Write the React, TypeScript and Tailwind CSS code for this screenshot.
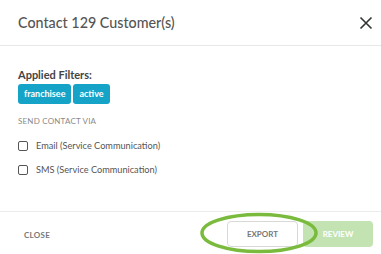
import React from "react";

export default function App() {
  const font = { fontFamily: "Lato, 'Open Sans', sans-serif" };
  return (
    <div className="relative w-[381px] h-[254px] bg-white overflow-hidden" style={font}>
      <div className="flex items-center justify-between h-[46px] pl-[18px] pr-[8px] border-b border-[#e8e8e8]">
        <div className="text-[14.3px] text-[#555555] font-medium">Contact 129 Customer(s)</div>
        <svg width="14" height="14" viewBox="0 0 14 14" className="mr-[0px]">
          <path d="M1.5 1.5 L12.5 12.5 M12.5 1.5 L1.5 12.5" stroke="#333" strokeWidth="1.6" />
        </svg>
      </div>
      <div className="h-[165px] pl-[18px] pt-[22px]">
        <div className="text-[11px] font-bold text-[#444] leading-[14px]">Applied Filters:</div>
        <div className="flex gap-[2px] mt-[2px]">
          <span className="h-[20px] px-[6px] flex items-center rounded-[3px] bg-[#15a3c7] text-white text-[9px] font-bold">franchisee</span>
          <span className="h-[20px] px-[6px] flex items-center rounded-[3px] bg-[#15a3c7] text-white text-[9px] font-bold">active</span>
        </div>
        <div className="mt-[12px] text-[8px] tracking-[0.2px] text-[#8a8a8a] uppercase leading-[10px]">Send contact via</div>
        <div className="mt-[13px] flex items-center gap-[8px]">
          <span className="w-[10px] h-[10px] border border-[#555] rounded-[2px]" />
          <span className="text-[9.2px] text-[#555]">Email (Service Communication)</span>
        </div>
        <div className="mt-[10px] flex items-center gap-[8px]">
          <span className="w-[10px] h-[10px] border border-[#555] rounded-[2px]" />
          <span className="text-[9.2px] text-[#555]">SMS (Service Communication)</span>
        </div>
      </div>
      <div className="border-t border-[#ececec] h-[43px] flex items-center pl-[24px] pr-[8px]">
        <span className="text-[8px] font-bold text-[#777] tracking-[0.3px] mt-[3px]">CLOSE</span>
        <div className="ml-auto flex gap-[5px] mt-[2px]">
          <button className="w-[71px] h-[26px] border border-[#d8d8d8] rounded-[4px] bg-white text-[8px] font-bold text-[#777]">EXPORT</button>
          <button className="w-[70px] h-[26px] rounded-[4px] bg-[#c3e4b2] text-[8px] font-bold text-white">REVIEW</button>
        </div>
      </div>
      <svg className="absolute left-[199px] top-[212px]" width="120" height="42" viewBox="0 0 120 42">
        <ellipse cx="60" cy="21" rx="57" ry="18.5" fill="none" stroke="#7abb3e" strokeWidth="3.5" />
      </svg>
    </div>
  );
}
